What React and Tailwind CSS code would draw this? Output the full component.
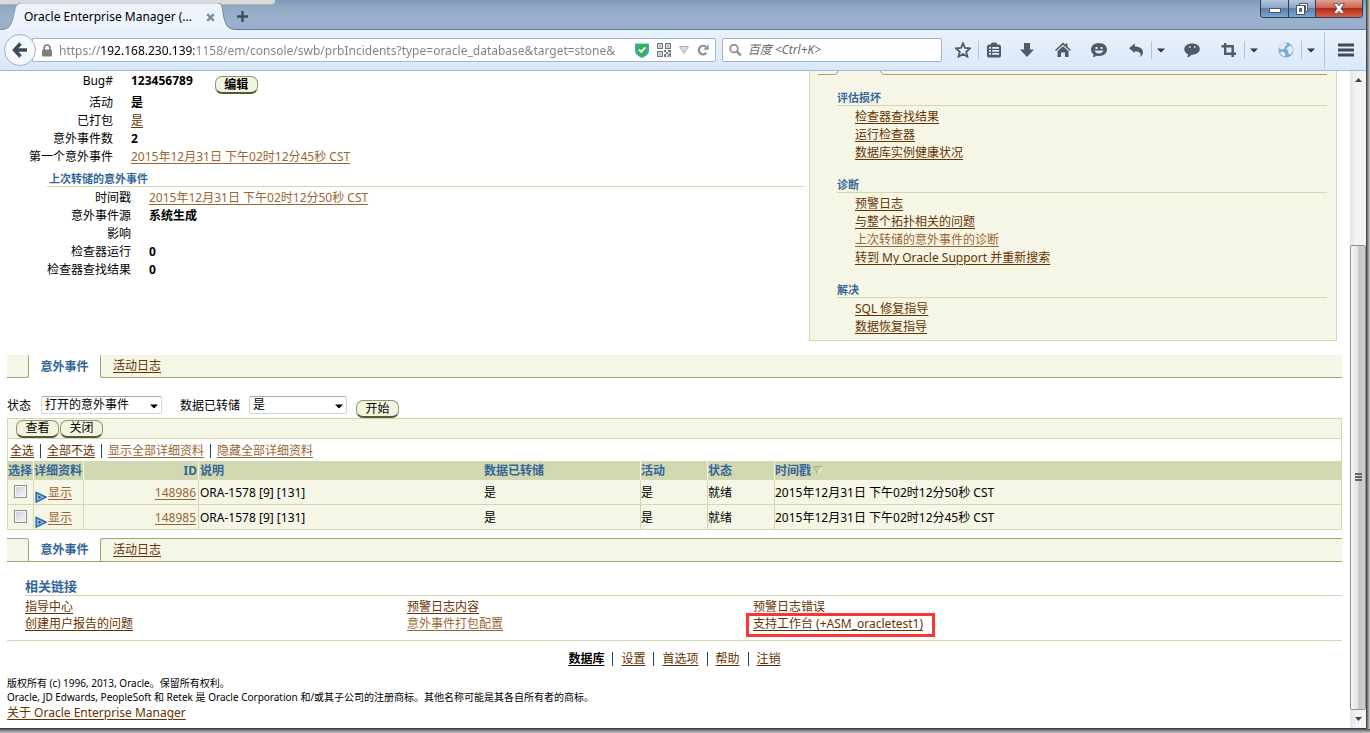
import clsx from 'clsx';

const incidents = [
  { id: '148986', desc: 'ORA-1578 [9] [131]', dumped: '是', active: '是', status: '就绪', time: '2015年12月31日 下午02时12分50秒 CST' },
  { id: '148985', desc: 'ORA-1578 [9] [131]', dumped: '是', active: '是', status: '就绪', time: '2015年12月31日 下午02时12分45秒 CST' },
];

const guideSections = [
  {
    title: '评估损坏',
    links: [{ text: '检查器查找结果' }, { text: '运行检查器' }, { text: '数据库实例健康状况' }],
  },
  {
    title: '诊断',
    links: [
      { text: '预警日志' },
      { text: '与整个拓扑相关的问题' },
      { text: '上次转储的意外事件的诊断', visited: true },
      { text: '转到 My Oracle Support 并重新搜索' },
    ],
  },
  {
    title: '解决',
    links: [{ text: 'SQL 修复指导' }, { text: '数据恢复指导' }],
  },
];

const Link = ({ visited, className, children }) => (
  <a href="#" className={clsx('underline underline-offset-2', visited ? 'text-[#996633]' : 'text-[#663300]', className)}>
    {children}
  </a>
);

const PillButton = ({ className, children }) => (
  <button
    type="button"
    className={clsx(
      'h-[18px] w-[43px] shrink-0 rounded-[7px] border border-b-2 border-[#8c9a6a] border-b-[#4f5c33] bg-[#f2f4e0] text-xs leading-[14px] text-black',
      className
    )}
  >
    {children}
  </button>
);

/* ---------- Browser chrome ---------- */

const Caret = () => (
  <button type="button" aria-label="更多" className="mr-1 flex w-[18px] justify-center">
    <svg width="8" height="5" viewBox="0 0 8 5"><path d="M0 .5h8L4 4.5z" fill="#2b3640" /></svg>
  </button>
);

const Separator = () => <span className="h-[18px] w-px shrink-0 bg-[#b3c3d6]" />;

const ToolButton = ({ label, className, children }) => (
  <button type="button" aria-label={label} className={clsx('flex shrink-0 items-center justify-center', className)}>
    <svg width="16" height="16" viewBox="0 0 16 16" fill="#4e5b67">{children}</svg>
  </button>
);

const TitleBar = () => (
  <div className="relative flex h-[30px] items-start bg-[linear-gradient(180deg,#7f9cb9_0px,#96adc8_10px,#9bb0cc_22px,#93b0cd_30px)] shadow-[inset_0_-1px_0_#5f7d9b]">
    <div className="absolute top-0 left-0 h-[5px] w-[275px] rounded-br-sm border-b border-[#b4b4b4] bg-[#d9d9d9]" />
    <div className="relative mt-[3px] flex h-[27px] items-stretch">
      <svg width="20" height="27" viewBox="0 0 20 27">
        <path d="M0 27C9 27 11 23 13 15S15 0 20 0V27z" fill="#edf3fb" />
        <path d="M0 26.5C9 26.5 11 23 13 15S15 .5 20 .5" fill="none" stroke="#8299b3" />
      </svg>
      <div className="flex w-[199px] items-center justify-between border-t border-[#c9d3df] bg-[#edf3fb] pr-1 pl-1">
        <span className="whitespace-nowrap">Oracle Enterprise Manager (...</span>
        <button type="button" aria-label="关闭标签页">
          <svg width="9" height="9" viewBox="0 0 9 9"><path d="M1.2 1.2l6.6 6.6M7.8 1.2L1.2 7.8" stroke="#7e8c9c" strokeWidth="2.4" /></svg>
        </button>
      </div>
      <svg width="18" height="27" viewBox="0 0 18 27">
        <path d="M18 27C9 27 7 23 5 15S4 0 0 0V27z" fill="#edf3fb" />
        <path d="M18 26.5C9 26.5 7 23 5 15S4 .5 0 .5" fill="none" stroke="#6f8aa6" />
      </svg>
      <button type="button" aria-label="新建标签页" className="flex items-center">
        <svg width="11" height="11" viewBox="0 0 11 11"><path d="M5.5 0v11M0 5.5h11" stroke="#3b4d60" strokeWidth="2.4" /></svg>
      </button>
    </div>
    <div className="mr-[3px] ml-auto flex h-[18px] overflow-hidden rounded-b border border-t-0 border-[#2c3f5a]">
      <button type="button" aria-label="最小化" className="flex w-7 items-end justify-center border-r border-[#2c3f5a] bg-[linear-gradient(180deg,#b5c6dc_0%,#8ba5c7_45%,#5d7fab_50%,#7fa3cf_100%)] pb-1">
        <svg width="12" height="5" viewBox="0 0 12 5"><rect x=".5" y=".5" width="11" height="4" fill="#fff" stroke="#4a5568" /></svg>
      </button>
      <button type="button" aria-label="还原" className="flex w-[27px] items-center justify-center border-r border-[#2c3f5a] bg-[linear-gradient(180deg,#b5c6dc_0%,#8ba5c7_45%,#5d7fab_50%,#7fa3cf_100%)]">
        <svg width="12" height="12" viewBox="0 0 12 12">
          <path d="M3.5.5h8v8h-2v-6h-6z" fill="#fff" stroke="#4a5568" />
          <path d="M.5 2.5h8v9h-8zM3.5 5.5v3h2v-3z" fillRule="evenodd" fill="#fff" stroke="#4a5568" />
        </svg>
      </button>
      <button type="button" aria-label="关闭" className="flex w-[46px] items-center justify-center bg-[linear-gradient(180deg,#e0a394_0%,#cd6350_45%,#b42a14_50%,#d5614b_100%)]">
        <svg width="12" height="11" viewBox="0 0 11 10">
          <path d="M.5.5h3.500L5.500 2.500 7 .5h3.500L7.400 5l3.100 4.500H7L5.500 7.500 4 9.500H.5L3.600 5z" fill="#fff" stroke="#5a4a58" strokeWidth=".8" />
        </svg>
      </button>
    </div>
  </div>
);

const AddressBar = () => (
  <div className="flex min-w-0 flex-1 items-center">
    <button type="button" aria-label="后退" className="relative z-10 ml-1 flex size-8 shrink-0 items-center justify-center rounded-full border border-[#9db2cb] bg-[#f5f9fd]">
      <svg width="16" height="16" viewBox="0 0 16 16">
        <path d="M8.500 1.500L2.500 8l6 6.500M3 8h12" fill="none" stroke="#3d4b59" strokeWidth="3.400" />
      </svg>
    </button>
    <div className="-ml-1 flex h-6 min-w-0 flex-1 items-center rounded-r-xs border border-[#9fb4cd] bg-white pr-1.5 pl-[9px]">
      <svg width="10" height="13" viewBox="0 0 10 13" className="shrink-0">
        <path d="M2.200 6V3.800a2.800 2.800 0 0 1 5.600 0V6" fill="none" stroke="#808080" strokeWidth="1.700" />
        <rect y="5.500" width="10" height="7" rx="1" fill="#808080" />
      </svg>
      <input
        type="text"
        aria-label="地址"
        readOnly
        value="https://192.168.230.139:1158/em/console/swb/prbIncidents?type=oracle_database&target=stone&"
        className="ml-[7px] h-5 min-w-0 flex-1 bg-[linear-gradient(90deg,#808080_42px,#000_42px,#000_135px,#808080_135px)] bg-clip-text text-transparent outline-none"
      />
      <div className="ml-1 flex shrink-0 items-center gap-2">
        <svg width="14" height="15" viewBox="0 0 14 15">
          <path d="M0 .5h14V8c0 3.500-3.500 5.500-7 7-3.500-1.500-7-3.500-7-7z" fill="#3fa9d6" />
          <path d="M1.500 1.500h11V8c0 2.700-2.500 4.300-5.500 5.600C4 12.300 1.500 10.700 1.500 8z" fill="#37b24a" />
          <path d="M3.800 6.500l2.400 2.400 4.200-4.600" fill="none" stroke="#fff" strokeWidth="1.800" />
        </svg>
        <svg width="14" height="14" viewBox="0 0 14 14" fill="#6f7a85">
          <path fillRule="evenodd" d="M0 0h6v6H0zM1.200 1.200v3.600h3.600V1.200zM8 0h6v6H8zM9.200 1.200v3.600h3.600V1.200zM0 8h6v6H0zM1.200 9.200v3.600h3.600V9.200z" />
          <path d="M2.300 2.300h1.400v1.400H2.300zM10.300 2.300h1.400v1.400h-1.400zM2.300 10.300h1.400v1.400H2.300zM7 7h2v2H7zM11 7h3v2h-3zM9 9h2v2H9zM7 11h2v3H7zM11 11h1.500v1.500H11zM12.500 9.500H14V14h-1.500zM10 12.500h1.500V14H10z" />
        </svg>
        <svg width="10" height="8" viewBox="0 0 10 8"><path d="M.5.5h9L5 7.500z" fill="#d5dae1" stroke="#a6b0bb" /></svg>
        <svg width="12" height="12" viewBox="0 0 12 12">
          <path d="M9.500 8.800A4.300 4.300 0 1 1 9 2.800" fill="none" stroke="#8493a2" strokeWidth="2.200" />
          <path d="M11.700.3v5.500H6.300z" fill="#8493a2" />
        </svg>
      </div>
    </div>
  </div>
);

const SearchBar = () => (
  <div className="ml-1.5 flex h-6 w-[220px] shrink-0 items-center rounded-xs border border-[#9fb4cd] bg-white pl-1.5">
    <svg width="14" height="14" viewBox="0 0 14 14">
      <circle cx="5.500" cy="5.500" r="4.200" fill="none" stroke="#8f8f8f" strokeWidth="2" />
      <path d="M8.800 8.800l4.200 4.200" stroke="#8f8f8f" strokeWidth="2.600" />
    </svg>
    <input type="text" aria-label="搜索" placeholder="百度 <Ctrl+K>" className="ml-1.5 w-full min-w-0 italic outline-none placeholder:text-[#6b6b6b]" />
  </div>
);

const Toolbar = () => (
  <div className="flex h-[41px] items-center border-b border-[#a5b9d6] bg-[linear-gradient(180deg,#e9f1fb,#d9e8f8)]">
    <AddressBar />
    <SearchBar />
    <div className="ml-1.5 flex shrink-0 items-center">
      <ToolButton label="书签" className="w-[30px]">
        <path d="M8 1.300l2 4.700 5 .4-3.800 3.300 1.200 5L8 12l-4.400 2.700 1.200-5L1 6.400 6 6z" fill="none" stroke="#4e5b67" strokeWidth="1.800" />
      </ToolButton>
      <Separator />
      <ToolButton label="书签列表" className="w-[30px]">
        <path fillRule="evenodd" d="M5 2.500V1.500L6.500.5h3L11 1.500v1h2.500l1.500 1.500v10l-1 1.500H2L1 14V4l1.500-1.500zM3 5v1.800h2V5zM6.200 5v1.800H13V5zM3 8v1.800h2V8zM6.200 8v1.800H13V8zM3 11v1.800h2V11zM6.200 11v1.800H13V11z" />
      </ToolButton>
      <ToolButton label="下载" className="w-9"><path d="M5 1h6v6.500h4L8 15 1 7.500h4z" /></ToolButton>
      <ToolButton label="主页" className="w-9">
        <path d="M8 .5l2.500 2.300V1.500h2v3.200L16 8l-1 1-7-6.200L1 9 0 8z" />
        <path d="M8 4.200L13.500 9v6H10v-4.500H6V15H2.500V9z" />
      </ToolButton>
      <ToolButton label="表情" className="w-9">
        <path fillRule="evenodd" d="M8 1c4.500 0 8 2.800 8 6.600S12.500 14 8 14c-.8 0-1.500-.1-2.200-.2L2 15.500l.6-3C1 11.300 0 9.600 0 7.600 0 3.800 3.500 1 8 1zM4.500 5v2h2V5zM9.500 5v2h2V5zM3.500 8.500c.8 2 2.400 3 4.500 3s3.700-1 4.500-3z" />
      </ToolButton>
      <ToolButton label="撤销" className="w-[34px] pl-1">
        <path d="M1 6.200L6.800 1.500v3C12 4.500 15 7 15 10.200c0 2.300-1.300 4-3.500 4.800 1-1 1.300-2 1-3-.5-1.700-2.500-2.700-5.700-2.700V11z" />
      </ToolButton>
      <Separator />
      <Caret />
      <ToolButton label="聊天" className="w-9">
        <path fillRule="evenodd" d="M8.200 1.500c4.300 0 7.600 2.200 7.600 5.500s-3.300 5.700-7.600 5.700H7.500C6.500 14 5 15 3 15.200c.8-1 1-2 .9-3C1.600 11.200.3 9.400.3 7.200.3 3.800 3.800 1.500 8.200 1.500zM5 4.200v1.500h1.500V4.200zM10 4.200v1.500h1.500V4.200z" />
      </ToolButton>
      <ToolButton label="截图" className="w-[34px] pl-1">
        <path d="M3 1h2.400v9.500H15V13H3zM.5 3h12.400v12h-2.500V5.400H.5z" />
      </ToolButton>
      <Separator />
      <Caret />
      <ToolButton label="代理" className="w-[34px] pl-1">
        <circle cx="8" cy="8" r="7.500" fill="#79a9d1" />
        <path d="M2 3.500C4 1.500 6 .8 8 .8l1 2-2 1.700-1 2.500-3 .5L1 6zM9.500 5l3-1.500 2 1.500.5 4-2.500 3.500-2-1L10 8.500 8.500 7zM3 9.500l3 .5 1.500 2-1 2.700C4.500 14 3 12.500 2.200 11z" fill="#dfeef7" />
      </ToolButton>
      <Separator />
      <Caret />
      <span className="h-9 w-px bg-[#b3c3d6]" />
      <ToolButton label="菜单" className="w-[41px]">
        <path d="M0 1.500h16v3H0zM0 6.500h16v3H0zM0 11.500h16v3H0z" fill="#3f4b57" />
      </ToolButton>
    </div>
  </div>
);

const ScrollBar = () => (
  <div className="flex w-4 shrink-0 flex-col bg-[linear-gradient(90deg,#e3e3e3,#f3f3f3_40%)]">
    <div className="flex h-[18px] items-center justify-center">
      <svg width="7" height="4" viewBox="0 0 7 4"><path d="M0 4h7L3.500 0z" fill="#444" /></svg>
    </div>
    <div className="flex-[156]" />
    <div className="flex flex-[464] flex-col items-center justify-center gap-px rounded-xs border border-[#909090] bg-[linear-gradient(90deg,#f5f5f5,#e4e4e8_45%,#c4c4ca_60%,#cfcfd4)]">
      <span className="h-0.5 w-[7px] bg-[#666]" />
      <span className="h-0.5 w-[7px] bg-[#666]" />
      <span className="h-0.5 w-[7px] bg-[#666]" />
    </div>
    <div className="flex h-[18px] items-center justify-center">
      <svg width="7" height="4" viewBox="0 0 7 4"><path d="M0 0h7L3.500 4z" fill="#444" /></svg>
    </div>
  </div>
);

/* ---------- Page content ---------- */

const DetailRow = ({ label, nested, tall, children }) => (
  <div className={clsx('flex gap-[18px]', tall ? 'h-[22px]' : 'h-[18px]')}>
    <dt className={clsx('shrink-0 text-right', nested ? 'w-[131px]' : 'w-[113px]')}>{label}</dt>
    <dd className="flex font-bold">{children}</dd>
  </div>
);

const ProblemDetails = () => (
  <div className="flex-1">
    <dl className="pt-px">
      <DetailRow label="Bug#" tall>
        123456789
        <PillButton className="mt-1 ml-[22px] font-bold">编辑</PillButton>
      </DetailRow>
      <DetailRow label="活动">是</DetailRow>
      <DetailRow label="已打包"><Link className="font-normal">是</Link></DetailRow>
      <DetailRow label="意外事件数">2</DetailRow>
      <DetailRow label="第一个意外事件">
        <Link visited className="font-normal">2015年12月31日 下午02时12分45秒 CST</Link>
      </DetailRow>
    </dl>
    <h3 className="mt-[5px] ml-[47px] border-b border-[#d2d8b0] pl-0.5 text-[11px] leading-[15px] font-bold text-[#336699]">上次转储的意外事件</h3>
    <dl className="mt-0.5">
      <DetailRow label="时间戳" nested>
        <Link visited className="font-normal">2015年12月31日 下午02时12分50秒 CST</Link>
      </DetailRow>
      <DetailRow label="意外事件源" nested>系统生成</DetailRow>
      <DetailRow label="影响" nested />
      <DetailRow label="检查器运行" nested>0</DetailRow>
      <DetailRow label="检查器查找结果" nested>0</DetailRow>
    </dl>
  </div>
);

const GuidePanel = () => (
  <div className="w-[528px] shrink-0 border border-t-0 border-[#d2d8b0] bg-[#f5f6e6] pr-[9px] pb-1 pl-2">
    <div className="flex h-1">
      <div className="w-[17px] border-b border-[#a0a476]" />
      <svg width="50" height="4" viewBox="0 0 50 4">
        <path d="M0 3.500h1L3 0M45 0l3 3.500h2" fill="none" stroke="#a0a476" />
      </svg>
      <div className="flex-1 border-b border-[#a0a476]" />
    </div>
    {guideSections.map(section => (
      <section key={section.title} className="mt-4 ml-[19px]">
        <h3 className="border-b border-[#d2d8b0] text-[11px] leading-[14px] font-bold text-[#336699]">{section.title}</h3>
        <ul className="mt-0.5 ml-[18px]">
          {section.links.map(link => (
            <li key={link.text}><Link visited={link.visited}>{link.text}</Link></li>
          ))}
        </ul>
      </section>
    ))}
  </div>
);

// Tab strip shown above and below the table; the lower one also has a top rule
const TabStrip = ({ bottom }) => (
  <nav className={clsx('flex', bottom ? 'h-6' : 'h-[23px]')}>
    <div className={clsx('w-[22px] border-r border-b border-[#a0a476] bg-[#f5f6e6]', bottom ? 'rounded-tr-[3px] border-t' : 'rounded-br-[3px]')} />
    <span className={clsx('flex w-[71px] items-center justify-center font-bold text-[#336699]', bottom && 'border-b border-[#a0a476]')}>意外事件</span>
    <div className={clsx('flex flex-1 items-center border-b border-l border-[#a0a476] bg-[#f5f6e6] pl-3', bottom ? 'rounded-tl-[3px] border-t' : 'rounded-bl-[3px]')}>
      <Link>活动日志</Link>
    </div>
  </nav>
);

const SelectBox = ({ id, value, className }) => (
  <div className={clsx('relative', className)}>
    <select id={id} defaultValue={value} className="block h-[18px] w-full appearance-none rounded-xs border border-[#d4d6db] border-t-[#a9abb0] bg-white pl-[3px] leading-4">
      <option>{value}</option>
    </select>
    <svg width="8" height="5" viewBox="0 0 8 5" className="pointer-events-none absolute top-2 right-1"><path d="M0 .5h8L4 4.500z" fill="#000" /></svg>
  </div>
);

const Filters = () => (
  <form className="flex h-10 items-start pt-[18px] leading-5">
    <label htmlFor="status" className="w-[34px]">状态</label>
    <SelectBox id="status" value="打开的意外事件" className="w-[121px]" />
    <label htmlFor="dumped" className="ml-[18px] w-[69px]">数据已转储</label>
    <SelectBox id="dumped" value="是" className="w-[98px]" />
    <PillButton className="mt-1 ml-[9px]">开始</PillButton>
  </form>
);

const Bar = () => <span className="h-[14px] w-px bg-[#224466]" />;

const IncidentTable = () => (
  <div>
    <div className="flex h-[21px] items-center border border-[#d2d8b0] bg-[#f5f6e6] pl-2">
      <PillButton>查看</PillButton>
      <PillButton className="ml-px">关闭</PillButton>
    </div>
    <div className="flex h-[22px] items-center gap-1.5 border-x border-[#d2d8b0] pt-0.5 pl-0.5">
      <Link>全选</Link>
      <Bar />
      <Link>全部不选</Link>
      <Bar />
      <Link visited>显示全部详细资料</Link>
      <Bar />
      <Link visited>隐藏全部详细资料</Link>
    </div>
    <table className="w-full table-fixed border-separate border-spacing-0 border-l border-[#d2d8b0]">
      <colgroup>
        <col className="w-[26px]" />
        <col className="w-[50px]" />
        <col className="w-[115px]" />
        <col className="w-[285px]" />
        <col className="w-[157px]" />
        <col className="w-[67px]" />
        <col className="w-[67px]" />
        <col />
      </colgroup>
      <thead>
        <tr className="h-[19px] bg-[#d2d8b0] text-left leading-[18px] text-[#336699] [&>th]:border-r [&>th]:border-[#f5f6e6] [&>th]:whitespace-nowrap">
          <th>选择</th>
          <th>详细资料</th>
          <th className="pr-px text-right">ID</th>
          <th className="border-r-0! pl-px">说明</th>
          <th>数据已转储</th>
          <th>活动</th>
          <th>状态</th>
          <th className="border-r-0!">
            <span className="flex items-center gap-0.5">
              时间戳
              <svg width="10" height="9" viewBox="0 0 10 9">
                <path d="M.5.5h9L5 8z" fill="#c8cf9e" />
                <path d="M5 8L9.500.5" stroke="#fff" />
                <path d="M9.500.5h-9L5 8" fill="none" stroke="#a9b081" />
              </svg>
            </span>
          </th>
        </tr>
      </thead>
      <tbody>
        {incidents.map(row => (
          <tr key={row.id} className="h-[25px] bg-[#f5f6e6] [&>td]:border-r [&>td]:border-b [&>td]:border-[#d2d8b0] [&>td]:pt-0.5">
            <td>
              <input type="checkbox" aria-label={`选择 ${row.id}`} className="mb-1 ml-1.5 block size-[13px] appearance-none border border-[#8e8f8f] bg-[linear-gradient(135deg,#c9ced6,#f8f8f8)] shadow-[inset_0_0_0_1px_#f4f4f4]" />
            </td>
            <td>
              <span className="flex items-center gap-px pl-px">
                <svg width="12" height="12" viewBox="0 0 12 12" className="mt-2">
                  <path d="M1.200 1.500L11 6.200 1.200 11z" fill="#9cc3e6" stroke="#2f6ca8" strokeWidth="1.600" />
                  <path d="M3.500 4.800v3L6.500 6.300z" fill="#173f6b" />
                </svg>
                <Link visited>显示</Link>
              </span>
            </td>
            <td className="pr-0.5 text-right"><Link visited>{row.id}</Link></td>
            <td className="border-r-0! pl-px">{row.desc}</td>
            <td>{row.dumped}</td>
            <td>{row.active}</td>
            <td>{row.status}</td>
            <td>{row.time}</td>
          </tr>
        ))}
      </tbody>
    </table>
  </div>
);

const RelatedLinks = () => (
  <section className="mt-4 border-b border-[#d2d8b0] pb-2 pl-[18px]">
    <h2 className="border-b border-[#d2d8b0] text-[13px] leading-[17px] font-bold text-[#336699]">相关链接</h2>
    <div className="mt-0.5 grid grid-cols-[382px_346px_1fr] leading-[17px]">
      <Link>指导中心</Link>
      <Link>预警日志内容</Link>
      <Link>预警日志错误</Link>
      <Link>创建用户报告的问题</Link>
      <Link visited>意外事件打包配置</Link>
      <div>
        <span className="relative inline-block">
          <Link>支持工作台 (+ASM_oracletest1)</Link>
          <span className="pointer-events-none absolute -top-0.5 -right-3 -bottom-[5px] -left-[7px] border-3 border-[#fa3434]" />
        </span>
      </div>
    </div>
  </section>
);

const Footer = () => (
  <footer>
    <nav className="mt-[9px] flex items-center justify-center gap-2">
      <a href="#" className="font-bold text-black underline underline-offset-2">数据库</a>
      <Bar />
      <Link>设置</Link>
      <Bar />
      <Link>首选项</Link>
      <Bar />
      <Link>帮助</Link>
      <Bar />
      <Link>注销</Link>
    </nav>
    <div className="mt-2 text-[10px] leading-[14px]">
      <p>版权所有 (c) 1996, 2013, Oracle。保留所有权利。</p>
      <p>Oracle, JD Edwards, PeopleSoft 和 Retek 是 Oracle Corporation 和/或其子公司的注册商标。其他名称可能是其各自所有者的商标。</p>
    </div>
    <Link>关于 Oracle Enterprise Manager</Link>
  </footer>
);

const App = () => (
  <div className="flex min-h-screen flex-col bg-[linear-gradient(180deg,#4a4a4a,#c8c8c8)] font-['Noto_Sans','Noto_Sans_CJK_SC',sans-serif] text-xs leading-[18px] text-black">
    <div className="flex flex-1 bg-[linear-gradient(270deg,#d0d0d0_0px,#8a8a8a_2px,#333_4px)] pr-1">
      <div className="flex min-w-0 flex-1 flex-col border-b border-[#24405c] bg-white">
        <TitleBar />
        <Toolbar />
        <div className="flex flex-1">
          <main className="min-w-0 flex-1">
            <div className="flex gap-[5px] pr-[13px]">
              <ProblemDetails />
              <GuidePanel />
            </div>
            <div className="mt-3.5 mr-2 ml-[7px]">
              <TabStrip />
              <Filters />
              <IncidentTable />
              <div className="mt-2"><TabStrip bottom /></div>
              <RelatedLinks />
              <Footer />
            </div>
          </main>
          <ScrollBar />
        </div>
      </div>
    </div>
    <div className="h-1 bg-[linear-gradient(180deg,#555,#c8c8c8)]" />
  </div>
);

export default App;
